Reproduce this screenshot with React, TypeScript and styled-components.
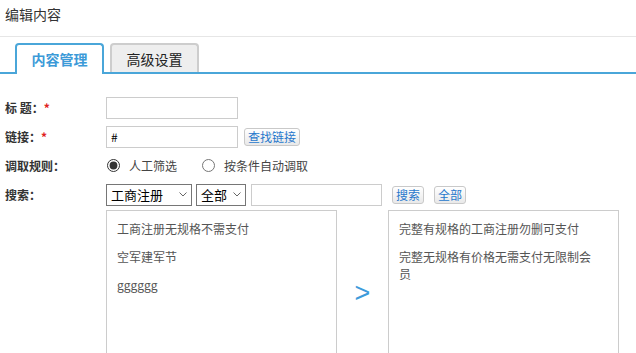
import React from "react";
import styled, { createGlobalStyle } from "styled-components";

const Global = createGlobalStyle`
  html, body { margin: 0; padding: 0; background: #fff; }
  body {
    font-family: "Noto Sans CJK SC", "Noto Sans", sans-serif;
    font-size: 12px;
    color: #333;
    overflow: hidden;
  }
`;

const Page = styled.div`
  width: 636px;
  height: 353px;
  overflow: hidden;
`;

const Header = styled.div`
  line-height: 28px;
  padding-left: 5px;
  font-size: 14px;
  color: #333;
  border-bottom: 1px solid #e6e6e6;
  box-sizing: border-box;
  height: 37px;
`;

const TabBar = styled.div`
  display: flex;
  align-items: flex-end;
  gap: 6px;
  padding: 6px 0 0 15px;
  height: 37px;
  box-sizing: border-box;
  border-bottom: 2px solid #4aa6d9;
`;

const Tab = styled.div<{ $active?: boolean }>`
  width: 89px;
  box-sizing: border-box;
  height: ${(p) => (p.$active ? "31px" : "29px")};
  margin-bottom: ${(p) => (p.$active ? "-2px" : "0")};
  border: 2px solid ${(p) => (p.$active ? "#4aa6d9" : "#cdcdcd")};
  border-bottom: none;
  border-radius: 4px 4px 0 0;
  background: ${(p) => (p.$active ? "#fff" : "#eeeeee")};
  color: ${(p) => (p.$active ? "#3c9ad8" : "#222")};
  font-weight: ${(p) => (p.$active ? "bold" : "normal")};
  font-size: 14px;
  display: flex;
  align-items: center;
  justify-content: center;
  padding-bottom: ${(p) => (p.$active ? "2px" : "0")};
`;

const Form = styled.div`
  display: grid;
  grid-template-columns: 101px 1fr;
  grid-auto-rows: 29px;
  padding: 19px 0 0 5px;
`;

const Label = styled.div`
  display: flex;
  align-items: center;
  font-weight: bold;
  color: #333;
  font-size: 12px;
  white-space: pre;
`;

const Star = styled.span`
  color: #e02020;
`;

const Field = styled.div`
  display: flex;
  align-items: center;
`;

const TextInput = styled.input<{ $w?: number; $ml?: number }>`
  width: ${(p) => p.$w ?? 132}px;
  height: 22px;
  box-sizing: border-box;
  border: 1px solid #cccccc;
  padding: 0 4px;
  font-family: "Noto Sans CJK SC", sans-serif;
  font-size: 12px;
  color: #000;
  outline: none;
  margin: 0 0 0 ${(p) => p.$ml ?? 0}px;
`;

const SmallButton = styled.button<{ $ml?: number }>`
  margin: 0 0 0 ${(p) => p.$ml ?? 6}px;
  height: 18px;
  padding: 0 3px;
  border: 1px solid #c9c9c9;
  border-radius: 3px;
  background: linear-gradient(#ffffff, #e9e9e9);
  color: #2778cc;
  font-family: "Noto Sans CJK SC", sans-serif;
  font-size: 12px;
  line-height: 16px;
  cursor: pointer;
`;

const RadioLabel = styled.label<{ $ml?: number }>`
  display: flex;
  align-items: center;
  margin-left: ${(p) => p.$ml ?? 0}px;
  color: #444;
  font-size: 12px;
`;

const Radio = styled.input`
  margin: 0 9px 0 1px;
  width: 13px;
  height: 13px;
  accent-color: #333;
`;

const SelectWrap = styled.div<{ $w: number; $ml?: number }>`
  position: relative;
  width: ${(p) => p.$w}px;
  height: 22px;
  margin-left: ${(p) => p.$ml ?? 0}px;
`;

const Select = styled.select`
  appearance: none;
  -webkit-appearance: none;
  width: 100%;
  height: 100%;
  margin: 0;
  font-family: "Noto Sans CJK SC", sans-serif;
  font-size: 13px;
  color: #000;
  border: 1px solid #767676;
  border-radius: 0;
  background: #fff;
  padding: 0 0 0 4px;
  outline: none;
`;

const Chevron = styled.svg`
  position: absolute;
  right: 5px;
  top: 8px;
  width: 8px;
  height: 5px;
  pointer-events: none;
`;

const Transfer = styled.div`
  display: flex;
  align-items: stretch;
  margin-left: 106px;
  margin-top: 1px;
`;

const ListBox = styled.div`
  width: 231px;
  height: 170px;
  box-sizing: border-box;
  border: 1px solid #cccccc;
  padding: 9px 20px 0 10px;
  color: #555;
  font-size: 12px;
`;

const ListItem = styled.div`
  line-height: 17px;
  margin-bottom: 11px;
`;

const Arrow = styled.div`
  width: 51px;
  display: flex;
  align-items: center;
  justify-content: center;
  font-family: "Liberation Sans", Arial, sans-serif;
  font-size: 27px;
  color: #3d9bdb;
  padding-bottom: 4px;
`;

function DropSelect({ w, ml, label }: { w: number; ml?: number; label: string }) {
  return (
    <SelectWrap $w={w} $ml={ml}>
      <Select defaultValue={label}>
        <option value={label}>{label}</option>
      </Select>
      <Chevron viewBox="0 0 8 5">
        <path d="M0.5 0.5 L4 4 L7.5 0.5" fill="none" stroke="#666" strokeWidth="1" />
      </Chevron>
    </SelectWrap>
  );
}

export default function App() {
  return (
    <Page>
      <Global />
      <Header>编辑内容</Header>
      <TabBar>
        <Tab $active>内容管理</Tab>
        <Tab>高级设置</Tab>
      </TabBar>
      <Form>
        <Label>
          标 题：<Star>*</Star>
        </Label>
        <Field>
          <TextInput />
        </Field>
        <Label>
          链接：<Star>*</Star>
        </Label>
        <Field>
          <TextInput defaultValue="#" />
          <SmallButton>查找链接</SmallButton>
        </Field>
        <Label>调取规则：</Label>
        <Field>
          <RadioLabel>
            <Radio type="radio" name="rule" defaultChecked />
            人工筛选
          </RadioLabel>
          <RadioLabel $ml={24}>
            <Radio type="radio" name="rule" />
            按条件自动调取
          </RadioLabel>
        </Field>
        <Label>搜索：</Label>
        <Field>
          <DropSelect w={86} label="工商注册" />
          <DropSelect w={50} ml={4} label="全部" />
          <TextInput $w={131} $ml={5} />
          <SmallButton $ml={10}>搜索</SmallButton>
          <SmallButton $ml={10}>全部</SmallButton>
        </Field>
      </Form>
      <Transfer>
        <ListBox>
          <ListItem>工商注册无规格不需支付</ListItem>
          <ListItem>空军建军节</ListItem>
          <ListItem>gggggg</ListItem>
        </ListBox>
        <Arrow>&gt;</Arrow>
        <ListBox>
          <ListItem>完整有规格的工商注册勿删可支付</ListItem>
          <ListItem>完整无规格有价格无需支付无限制会员</ListItem>
        </ListBox>
      </Transfer>
    </Page>
  );
}
